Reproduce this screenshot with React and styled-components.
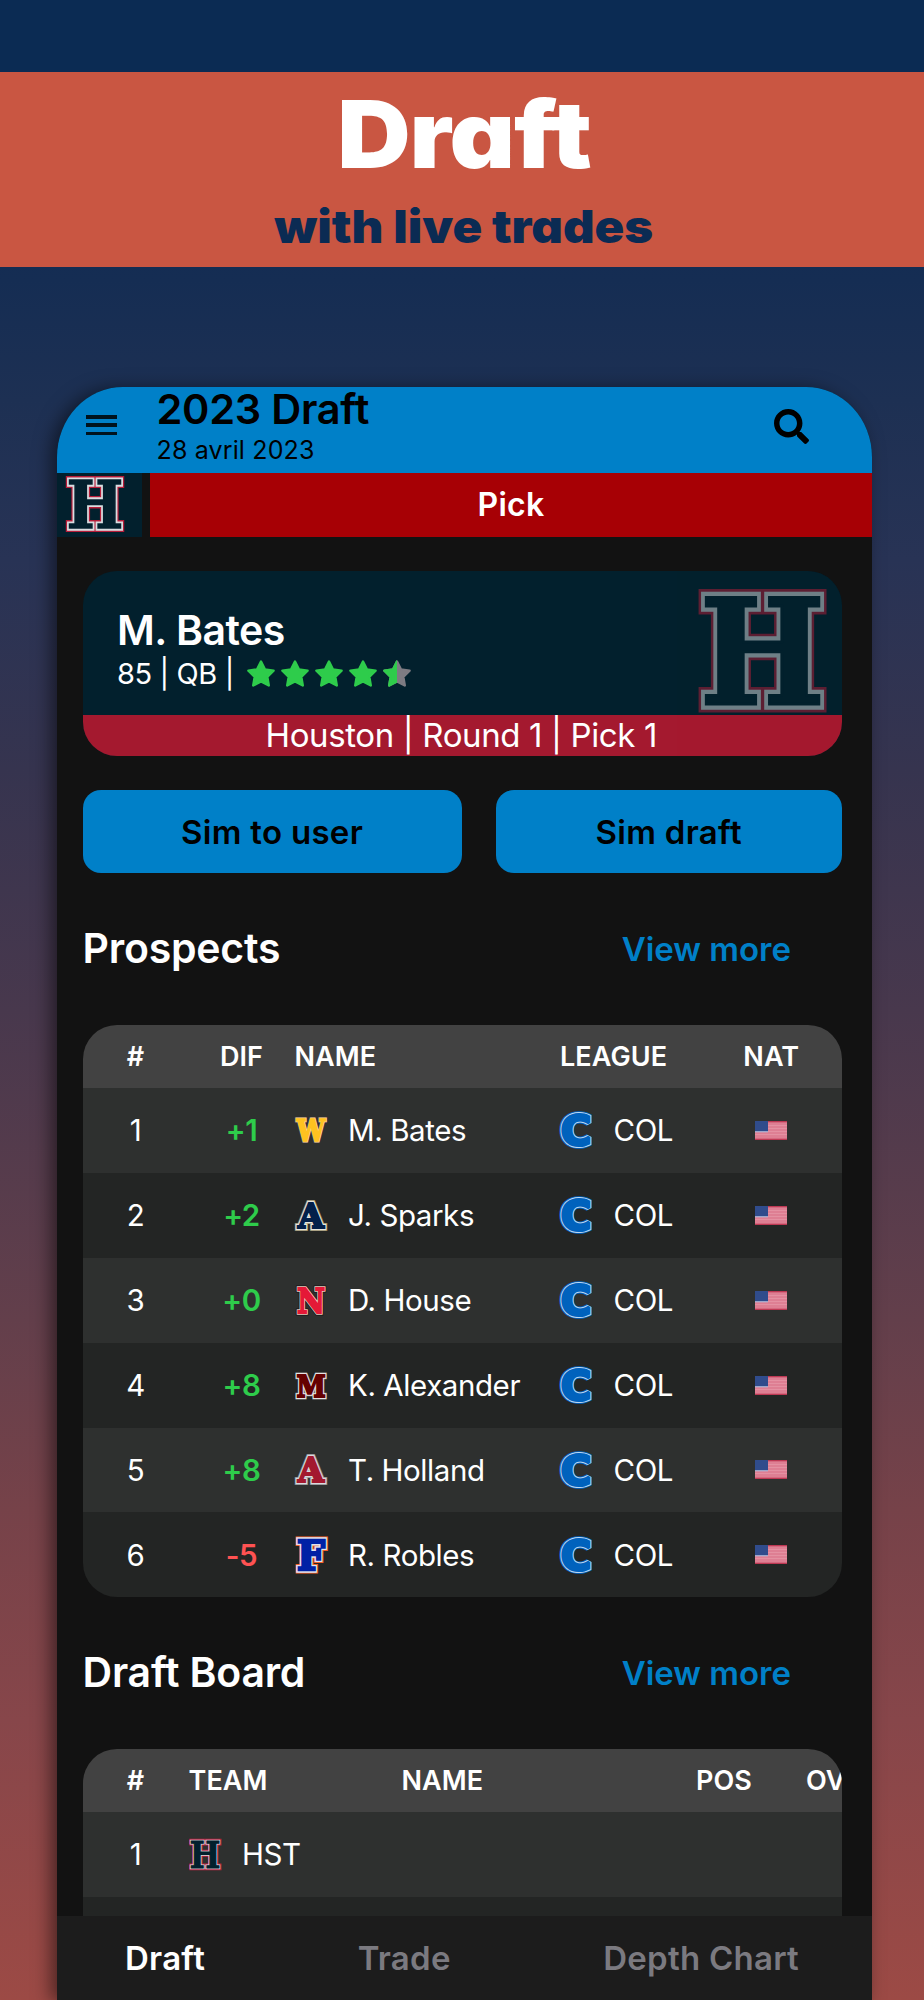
import React from "react";
import styled, { createGlobalStyle } from "styled-components";
import { FaSearch } from "react-icons/fa";

const GlobalStyle = createGlobalStyle`
  * { box-sizing: border-box; }
  body { margin: 0; background: #0b2b53; }
`;

const Poster = styled.main`
  height: 2000px;
  width: 924px;
  padding-top: 72px;
  overflow: hidden;
  display: flex;
  flex-direction: column;
  font-family: Inter, "Liberation Sans", sans-serif;
  background: linear-gradient(
    #0b2b53 0, #0b2b53 100px, #152d53 280px, #1d3053 400px, #283355 560px,
    #36344f 770px, #48384d 1010px, #633f4b 1320px, #764249 1510px,
    #87464a 1720px, #9c4a45 2000px
  );
`;

const Banner = styled.header`
  height: 195px;
  flex: none;
  background: #c95642;
  display: flex;
  flex-direction: column;
  align-items: center;
  padding: 16px 0 0 4px;
  font-feature-settings: "cv11";
`;

const BannerTitle = styled.h1`
  margin: 0;
  font-size: 93px;
  line-height: 92px;
  font-weight: 900;
  letter-spacing: -1px;
  color: #fff;
  transform: scaleX(1.093);
`;

const BannerSubtitle = styled.p`
  margin: 0;
  font-size: 46px;
  line-height: 92px;
  font-weight: 900;
  color: #0b2b53;
  transform: scaleX(1.066);
`;

const Phone = styled.section`
  margin: 120px 52px 0 57px;
  flex: 1;
  min-height: 0;
  display: flex;
  flex-direction: column;
  overflow: hidden;
  border-radius: 66px 66px 0 0 / 70px 70px 0 0;
  background: #121212;
  color: #fff;
  box-shadow: -6px 2px 18px rgba(0, 0, 0, 0.5);
`;

const AppBar = styled.div`
  height: 86px;
  flex: none;
  display: flex;
  background: #0080c8;
  color: #000;
`;

const MenuButton = styled.div`
  width: 99.5px;
  padding: 28px 0 0 29px;
`;

const MenuBar = styled.div`
  width: 31px;
  height: 3.5px;
  margin-bottom: 4.8px;
  background: #00131e;
`;

const AppTitles = styled.div`
  flex: 1;
`;

const AppTitle = styled.div`
  font-size: 41.5px;
  line-height: 44px;
  font-weight: 600;
  letter-spacing: -0.25px;
`;

const AppDate = styled.div`
  font-size: 25px;
  line-height: 38px;
  letter-spacing: 0.15px;
`;

const SearchButton = styled.div`
  width: 98px;
  padding-top: 22px;
  font-size: 35px;
  line-height: 0;
`;

const PickBar = styled.div`
  height: 63.7px;
  flex: none;
  display: flex;
`;

const PickTeam = styled.div`
  width: 85px;
  margin-right: 8px;
  padding: 4px 0 0 8.5px;
  line-height: 0;
  background: #02202d;
`;

const PickLabel = styled.div`
  flex: 1;
  display: flex;
  align-items: center;
  justify-content: center;
  font-size: 32px;
  font-weight: 600;
  letter-spacing: 0.3px;
  background: #a70005;
`;

const Content = styled.div`
  flex: 1;
  min-height: 0;
  overflow: hidden;
  padding: 34.3px 30px 0 25.5px;
`;

const PlayerCard = styled.div`
  height: 185px;
  border-radius: 34px;
  overflow: hidden;
  background: #02202d;
`;

const PlayerInfo = styled.div`
  height: 144px;
  display: flex;
  justify-content: space-between;
  padding: 34px 16px 0 34.5px;
`;

const PlayerName = styled.div`
  font-size: 41px;
  line-height: 50px;
  font-weight: 600;
  letter-spacing: -0.5px;
`;

const PlayerMeta = styled.div`
  display: flex;
  align-items: center;
  font-size: 29px;
  line-height: 37px;
  letter-spacing: -0.4px;
`;

const Stars = styled.span`
  display: flex;
  gap: 6px;
  margin-left: 13.5px;
`;

const PlayerCrest = styled.div`
  margin-top: -14.5px;
  line-height: 0;
  opacity: 0.5;
`;

const PlayerPick = styled.div`
  height: 41px;
  line-height: 41px;
  padding-right: 2px;
  text-align: center;
  font-size: 33px;
  letter-spacing: -0.38px;
  background: #a4192f;
`;

const Actions = styled.div`
  display: flex;
  gap: 34px;
  margin-top: 34px;
`;

const Action = styled.button`
  width: ${(p) => p.$width}px;
  height: 83.5px;
  padding: 0;
  border: 0;
  border-radius: 18px;
  background: #0080c8;
  color: #000;
  font: 600 33px Inter, "Liberation Sans", sans-serif;
  letter-spacing: 0.3px;
`;

const SectionHead = styled.div`
  height: 151.5px;
  display: flex;
  justify-content: space-between;
  align-items: center;
  padding: 0 51px 0 0;
`;

const SectionTitle = styled.h2`
  margin: 0 0 3px;
  font-size: 41px;
  font-weight: 600;
  letter-spacing: -0.22px;
`;

const ViewMore = styled.a`
  font-size: 33px;
  font-weight: 600;
  color: #0080c8;
`;

const Table = styled.div`
  border-radius: 34px;
  overflow: hidden;
`;

const Row = styled.div`
  display: grid;
  grid-template-columns: ${(p) => p.$columns};
  align-items: center;
  height: 84.9px;
  font-size: 29.5px;
  letter-spacing: -0.42px;
  background: ${(p) => (p.$alt ? "#232524" : "#2e302f")};
`;

const HeadRow = styled(Row)`
  height: 63px;
  font-size: 27px;
  font-weight: 600;
  letter-spacing: 0.1px;
  background: #424242;
`;

const Cell = styled.div`
  display: flex;
  align-items: center;
  white-space: nowrap;
  justify-content: ${(p) => (p.$center ? "center" : "flex-start")};
`;

const Diff = styled(Cell)`
  justify-content: center;
  font-weight: 600;
  color: ${(p) => (p.$down ? "#ff5252" : "#2ecc4b")};
`;

const CellIcon = styled.span`
  width: 53.5px;
  display: flex;
`;

const NavBar = styled.nav`
  height: 84.3px;
  flex: none;
  display: flex;
  align-items: center;
  padding: 0 73px 0 68px;
  justify-content: space-between;
  background: #1c1c1c;
`;

const NavItem = styled.span`
  font-size: 33px;
  font-weight: 600;
  letter-spacing: 0.25px;
  color: ${(p) => (p.$active ? "#fff" : "#7b7a80")};
`;

/* Block letter crest: an outer rim, an inner rim and a heavy letter inside. */
function Crest({
  letter,
  width,
  height,
  ink,
  fill,
  rim,
  outer,
  rimWidth = 1.3,
  outerWidth = 0.8,
  weight = 0.9,
  family = "DejaVu Serif",
  tall = 72.9,
  drop = 0,
}) {
  const edge = rimWidth + outerWidth + weight;
  const sx = (width - edge * 2) / ink;
  const sy = (height - edge * 2) / tall;
  const layer = (color, strokeWidth) => (
    <text
      transform={`translate(${width / 2} ${height - edge - drop * sy}) scale(${sx} ${sy})`}
      fontFamily={family}
      fontWeight="700"
      fontSize="100"
      textAnchor="middle"
      letterSpacing="0"
      strokeLinejoin="miter"
      strokeMiterlimit="2"
      vectorEffect="non-scaling-stroke"
      fill={color}
      stroke={color}
      strokeWidth={strokeWidth * 2}
    >
      {letter}
    </text>
  );
  return (
    <svg width={width} height={height} overflow="visible">
      {layer(outer, edge)}
      {layer(rim, rimWidth + weight)}
      {layer(fill, weight)}
    </svg>
  );
}

const HOUSTON = { letter: "H", ink: 84, fill: "#02202d", rim: "#d9dde0", outer: "#b51c38" };

function Star({ half }) {
  const color = half ? "#7d7b82" : "#2ecc4b";
  const outline = { strokeWidth: 2.4, strokeLinejoin: "round" };
  return (
    <svg width="28" height="27" viewBox="0 0 28 27">
      <path
        d="M14 1.500l3.900 7.900 8.700 1.300-6.300 6.100 1.500 8.700-7.800-4.100-7.800 4.100 1.500-8.700-6.300-6.100 8.700-1.300z"
        fill={color}
        stroke={color}
        {...outline}
      />
      {half && (
        <svg width="14" height="27" overflow="hidden">
          <path
            d="M14 1.500l3.900 7.900 8.700 1.300-6.300 6.100 1.500 8.700-7.800-4.100-7.800 4.100 1.500-8.700-6.300-6.100 8.700-1.300z"
            fill="#2ecc4b"
            stroke="#2ecc4b"
            {...outline}
          />
        </svg>
      )}
    </svg>
  );
}

function Flag() {
  return (
    <svg width="32" height="19" viewBox="0 0 32 19">
      <rect width="32" height="19" fill="#de7f93" />
      {[4, 7, 10, 13].map((y) => (
        <rect key={y} y={y} width="32" height="1" fill="#e491a2" />
      ))}
      <rect width="32" height="1.300" fill="#bd3853" />
      <rect y="17.700" width="32" height="1.300" fill="#bd3853" />
      <rect width="13" height="10.500" fill="#304c8c" />
      <rect y="10.300" width="13" height="1" fill="#a9bfe0" />
    </svg>
  );
}

const PROSPECT_COLUMNS = "106px 106px 265.500px 140.500px 1fr";
const BOARD_COLUMNS = "106px 213px 294.500px 110px 60px";

const prospects = [
  { dif: "+1", name: "M. Bates", logo: { letter: "W", height: 25, ink: 112, fill: "#ffc220", rim: "#f6d58a", outer: "#4b3a5c", rimWidth: 0.6, outerWidth: 0.5, weight: 0.7 } },
  { dif: "+2", name: "J. Sparks", logo: { letter: "A", height: 31, ink: 78, fill: "#03204a", rim: "#e6e6df", outer: "#8f8260", rimWidth: 1.1, weight: 1.1 } },
  { dif: "+0", name: "D. House", logo: { letter: "N", height: 29, ink: 88, fill: "#e51937", rim: "#e8c8bd", outer: "#151515", rimWidth: 0.8 } },
  { dif: "+8", name: "K. Alexander", logo: { letter: "M", height: 27, ink: 103, fill: "#650000", rim: "#e6e3e3", outer: "#8b8b8b", rimWidth: 1, outerWidth: 0.5 } },
  { dif: "+8", name: "T. Holland", logo: { letter: "A", height: 31, ink: 78, fill: "#a3192f", rim: "#d9dadd", outer: "#85878b", rimWidth: 1.1, weight: 1.1 } },
  { dif: "-5", name: "R. Robles", logo: { letter: "F", height: 37, ink: 64, fill: "#0021a5", rim: "#dfe2ee", outer: "#f4622b", weight: 1.3 } },
];

export default function App() {
  return (
    <>
      <GlobalStyle />
      <Poster>
        <Banner>
          <BannerTitle>Draft</BannerTitle>
          <BannerSubtitle>with live trades</BannerSubtitle>
        </Banner>
        <Phone>
          <AppBar>
            <MenuButton>
              <MenuBar />
              <MenuBar />
              <MenuBar />
            </MenuButton>
            <AppTitles>
              <AppTitle>2023 Draft</AppTitle>
              <AppDate>28 avril 2023</AppDate>
            </AppTitles>
            <SearchButton>
              <FaSearch />
            </SearchButton>
          </AppBar>
          <PickBar>
            <PickTeam>
              <Crest {...HOUSTON} width={58} height={55} rimWidth={1.8} outerWidth={1.3} weight={0.8} />
            </PickTeam>
            <PickLabel>Pick</PickLabel>
          </PickBar>
          <Content>
            <PlayerCard>
              <PlayerInfo>
                <div>
                  <PlayerName>M. Bates</PlayerName>
                  <PlayerMeta>
                    85 | QB |
                    <Stars>
                      <Star />
                      <Star />
                      <Star />
                      <Star />
                      <Star half />
                    </Stars>
                  </PlayerMeta>
                </div>
                <PlayerCrest>
                  <Crest {...HOUSTON} width={127} height={122} rimWidth={4} outerWidth={2.6} weight={1.4} />
                </PlayerCrest>
              </PlayerInfo>
              <PlayerPick>Houston | Round 1 | Pick 1</PlayerPick>
            </PlayerCard>
            <Actions>
              <Action $width={379}>Sim to user</Action>
              <Action $width={346.5}>Sim draft</Action>
            </Actions>
            <SectionHead>
              <SectionTitle>Prospects</SectionTitle>
              <ViewMore>View more</ViewMore>
            </SectionHead>
            <Table>
              <HeadRow $columns={PROSPECT_COLUMNS}>
                <Cell $center>#</Cell>
                <Cell $center>DIF</Cell>
                <Cell>NAME</Cell>
                <Cell>LEAGUE</Cell>
                <Cell $center>NAT</Cell>
              </HeadRow>
              {prospects.map((p, i) => (
                <Row key={p.name} $columns={PROSPECT_COLUMNS} $alt={i % 2 === 1}>
                  <Cell $center>{i + 1}</Cell>
                  <Diff $down={p.dif.startsWith("-")}>{p.dif}</Diff>
                  <Cell>
                    <CellIcon>
                      <Crest {...p.logo} width={32} />
                    </CellIcon>
                    {p.name}
                  </Cell>
                  <Cell>
                    <CellIcon>
                      <Crest
                        letter="C"
                        family="DejaVu Sans"
                        tall={75.7}
                        drop={1.4}
                        width={32}
                        height={38}
                        ink={61}
                        fill="#0062bd"
                        rim="#b9d7f3"
                        outer="#0062bd"
                        rimWidth={1}
                        weight={1.5}
                      />
                    </CellIcon>
                    COL
                  </Cell>
                  <Cell $center>
                    <Flag />
                  </Cell>
                </Row>
              ))}
            </Table>
            <SectionHead>
              <SectionTitle>Draft Board</SectionTitle>
              <ViewMore>View more</ViewMore>
            </SectionHead>
            <Table>
              <HeadRow $columns={BOARD_COLUMNS}>
                <Cell $center>#</Cell>
                <Cell>TEAM</Cell>
                <Cell>NAME</Cell>
                <Cell>POS</Cell>
                <Cell>OVR</Cell>
              </HeadRow>
              <Row $columns={BOARD_COLUMNS}>
                <Cell $center>1</Cell>
                <Cell>
                  <CellIcon>
                    <Crest {...HOUSTON} width={32} height={31} rimWidth={0.9} outerWidth={0.9} weight={0.4} />
                  </CellIcon>
                  HST
                </Cell>
              </Row>
              <Row $columns={BOARD_COLUMNS} $alt />
            </Table>
          </Content>
          <NavBar>
            <NavItem $active>Draft</NavItem>
            <NavItem>Trade</NavItem>
            <NavItem>Depth Chart</NavItem>
          </NavBar>
        </Phone>
      </Poster>
    </>
  );
}
